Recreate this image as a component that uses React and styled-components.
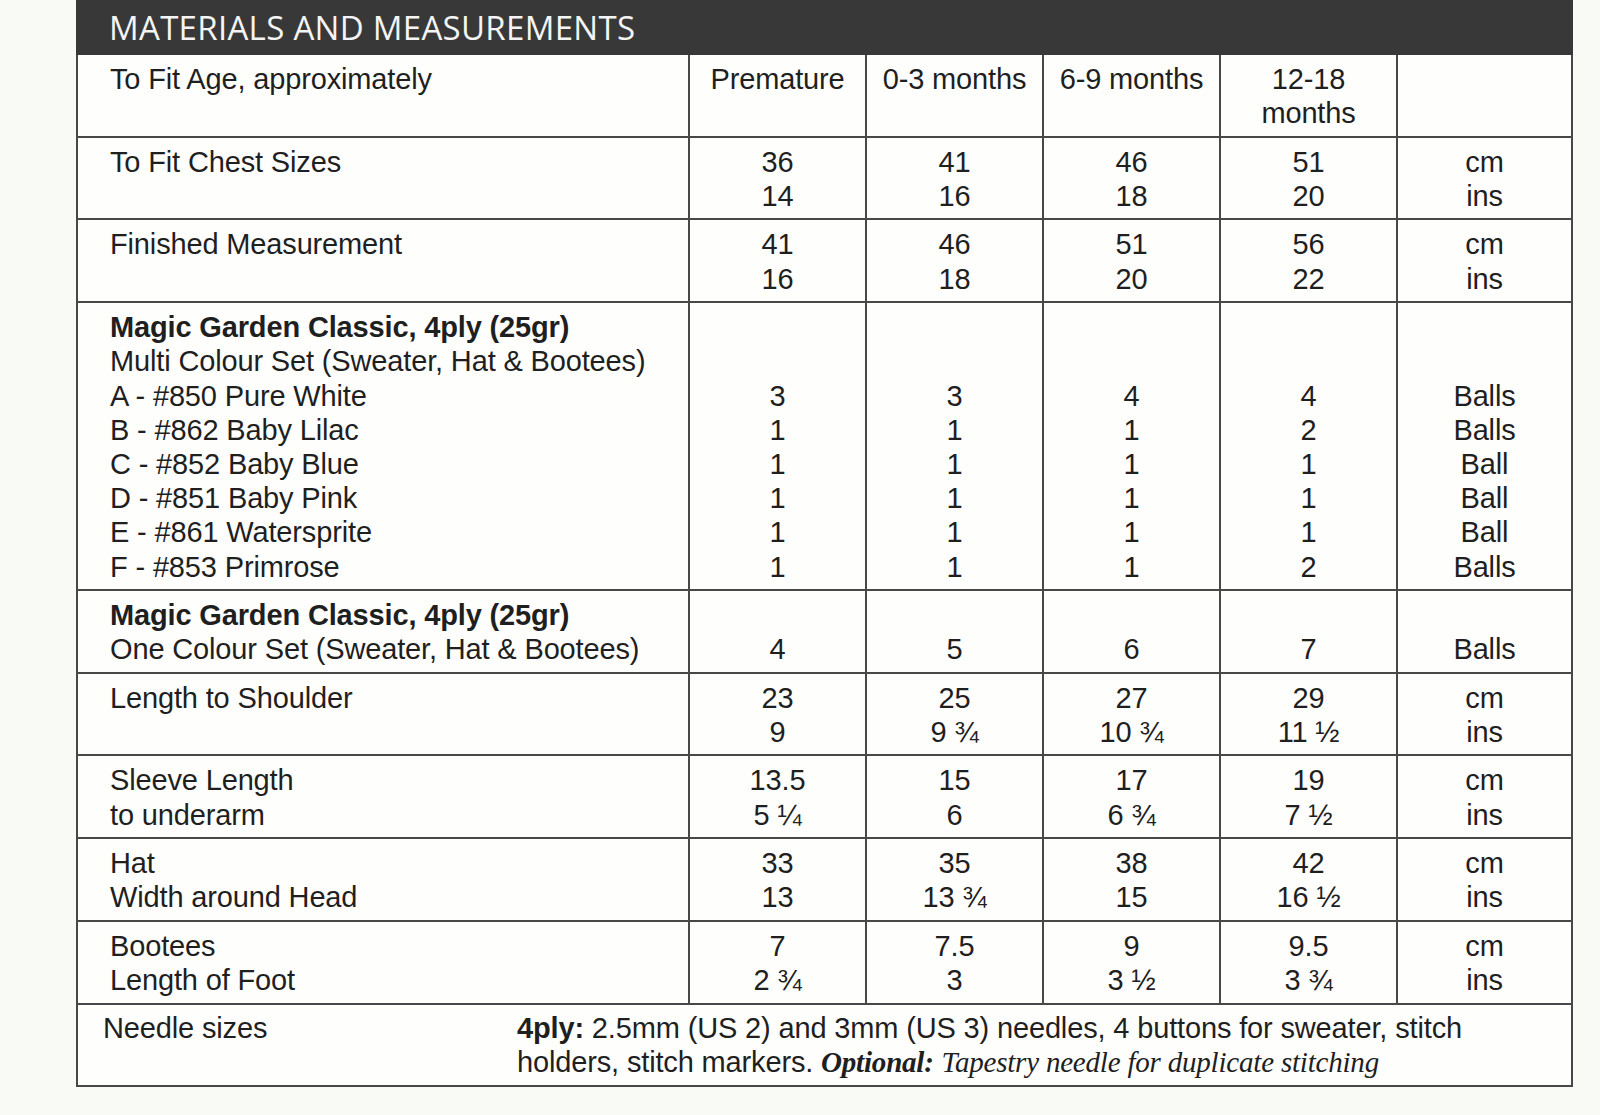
import React from 'react'
import styled, { createGlobalStyle } from 'styled-components'

const GlobalStyle = createGlobalStyle`
  html, body {
    margin: 0;
    padding: 0;
    background: #f9f9f6;
  }
`

const Page = styled.div`
  width: 1600px;
  height: 1115px;
  padding-left: 76px;
  box-sizing: border-box;
  font-family: "Liberation Sans", Arial, sans-serif;
  color: #1f1f1f;
`

const Sheet = styled.section`
  width: 1497px;
`

const Banner = styled.h2`
  margin: 0;
  height: 55px;
  display: flex;
  align-items: center;
  padding-left: 33px;
  background: #383838;
  color: #f4f4f4;
  font-family: "Open Sans", sans-serif;
  font-weight: 400;
  font-size: 33px;
  letter-spacing: 0.3px;
`

const Table = styled.div`
  background: #fefefd;
  border-left: 2px solid #484848;
  border-right: 2px solid #484848;
`

const Row = styled.div`
  display: grid;
  grid-template-columns: 610px 177px 177px 177px 177px 1fr;
  border-bottom: 2px solid #484848;
`

const Cell = styled.div`
  padding: 7px 0 5.3px;
  border-left: ${p => (p.$first ? 'none' : '2px solid #484848')};
  padding-left: ${p => (p.$first ? '32px' : '0')};
  text-align: ${p => (p.$first ? 'left' : 'center')};
  font-size: 29px;
  letter-spacing: -0.15px;
  line-height: 34.2px;
`

const Line = styled.div`
  min-height: 34.2px;
  font-weight: ${p => (p.$bold ? 700 : 400)};
  white-space: nowrap;
`

const NeedleRow = styled.div`
  display: grid;
  grid-template-columns: 414px 1fr;
  padding: 6px 0 5px 25px;
  border-bottom: 2px solid #484848;
  font-size: 29px;
  letter-spacing: -0.15px;
  line-height: 34.6px;
`

const Strong = styled.b`
  font-weight: 700;
`

const SerifBold = styled.b`
  font-family: "Liberation Serif", "Times New Roman", serif;
  font-style: italic;
  font-weight: 700;
  letter-spacing: -0.2px;
`

const SerifItalic = styled.i`
  font-family: "Liberation Serif", "Times New Roman", serif;
  font-style: italic;
  letter-spacing: -0.2px;
`

const UNITS = ['cm', 'ins']
const YARN = 'Magic Garden Classic, 4ply (25gr)'

const rows = [
  {
    label: ['To Fit Age, approximately'],
    cells: [['Premature'], ['0-3 months'], ['6-9 months'], ['12-18', 'months'], []],
  },
  {
    label: ['To Fit Chest Sizes'],
    cells: [['36', '14'], ['41', '16'], ['46', '18'], ['51', '20'], UNITS],
  },
  {
    label: ['Finished Measurement'],
    cells: [['41', '16'], ['46', '18'], ['51', '20'], ['56', '22'], UNITS],
  },
  {
    label: [
      { text: YARN, bold: true },
      'Multi Colour Set (Sweater, Hat & Bootees)',
      'A - #850 Pure White',
      'B - #862 Baby Lilac',
      'C - #852 Baby Blue',
      'D - #851 Baby Pink',
      'E - #861 Watersprite',
      'F - #853 Primrose',
    ],
    cells: [
      ['', '', '3', '1', '1', '1', '1', '1'],
      ['', '', '3', '1', '1', '1', '1', '1'],
      ['', '', '4', '1', '1', '1', '1', '1'],
      ['', '', '4', '2', '1', '1', '1', '2'],
      ['', '', 'Balls', 'Balls', 'Ball', 'Ball', 'Ball', 'Balls'],
    ],
  },
  {
    label: [{ text: YARN, bold: true }, 'One Colour Set (Sweater, Hat & Bootees)'],
    cells: [['', '4'], ['', '5'], ['', '6'], ['', '7'], ['', 'Balls']],
  },
  {
    label: ['Length to Shoulder'],
    cells: [['23', '9'], ['25', '9 ¾'], ['27', '10 ¾'], ['29', '11 ½'], UNITS],
  },
  {
    label: ['Sleeve Length', 'to underarm'],
    cells: [['13.5', '5 ¼'], ['15', '6'], ['17', '6 ¾'], ['19', '7 ½'], UNITS],
  },
  {
    label: ['Hat', 'Width around Head'],
    cells: [['33', '13'], ['35', '13 ¾'], ['38', '15'], ['42', '16 ½'], UNITS],
  },
  {
    label: ['Bootees', 'Length of Foot'],
    cells: [['7', '2 ¾'], ['7.5', '3'], ['9', '3 ½'], ['9.5', '3 ¾'], UNITS],
  },
]

const Lines = ({ items }) =>
  items.map((item, i) => {
    const line = typeof item === 'string' ? { text: item } : item
    return (
      <Line key={i} $bold={line.bold}>
        {line.text || '\u00a0'}
      </Line>
    )
  })

export default function App () {
  return (
    <Page>
      <GlobalStyle />
      <Sheet>
        <Banner>MATERIALS AND MEASUREMENTS</Banner>
        <Table>
          {rows.map((row, r) => (
            <Row key={r}>
              <Cell $first>
                <Lines items={row.label} />
              </Cell>
              {row.cells.map((cell, c) => (
                <Cell key={c}>
                  <Lines items={cell} />
                </Cell>
              ))}
            </Row>
          ))}
          <NeedleRow>
            <div>Needle sizes</div>
            <div>
              <Strong>4ply:</Strong> 2.5mm (US 2) and 3mm (US 3) needles, 4 buttons for sweater, stitch
              <br />
              holders, stitch markers. <SerifBold>Optional:</SerifBold>{' '}
              <SerifItalic>Tapestry needle for duplicate stitching</SerifItalic>
            </div>
          </NeedleRow>
        </Table>
      </Sheet>
    </Page>
  )
}
